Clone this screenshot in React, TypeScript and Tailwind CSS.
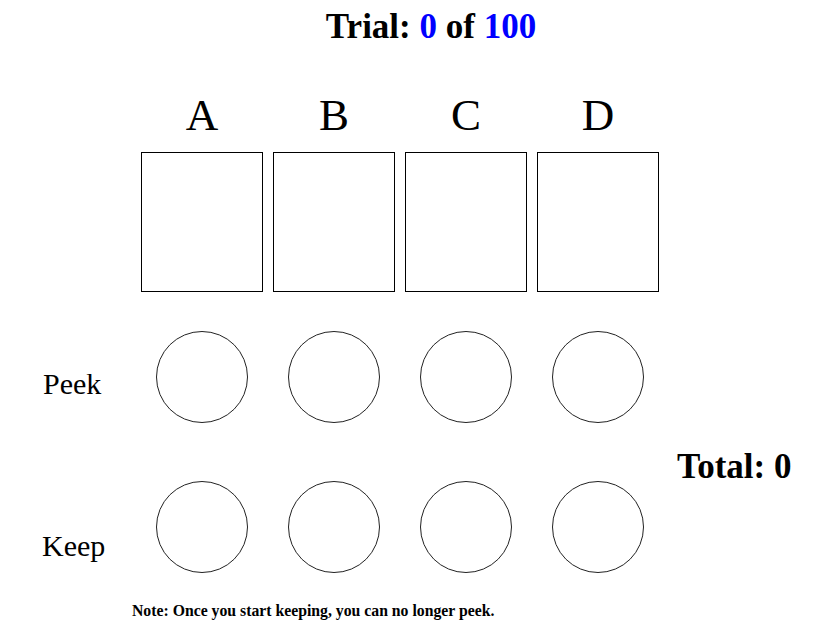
import React from "react";

const cols = ["A", "B", "C", "D"];

export default function App() {
  return (
    <div className="relative w-[834px] h-[643px] bg-white text-black font-['Liberation_Serif',serif]">
      <div className="pt-[7px] pl-[28px] text-center text-[35px] leading-[40px] font-bold">
        Trial: <span className="text-[#0000ff]">0</span> of <span className="text-[#0000ff]">100</span>
      </div>

      <div className="flex pl-[141px] gap-[10px] mt-[46px]">
        {cols.map((c) => (
          <div key={c} className="w-[122px] text-center text-[45px] leading-[45px]">
            {c}
          </div>
        ))}
      </div>

      <div className="flex pl-[141px] gap-[10px] mt-[14px]">
        {cols.map((c) => (
          <div key={c} className="w-[122px] h-[140px] border border-black" />
        ))}
      </div>

      <div className="flex mt-[39px]">
        <div className="flex flex-col">
          <div className="flex">
            <div className="w-[141px] pl-[43px] pt-[38px] text-[30px] leading-[30px]">Peek</div>
            <div className="flex gap-[10px]">
              {cols.map((c) => (
                <div key={c} className="w-[122px] flex justify-center">
                  <div className="w-[92px] h-[92px] rounded-full border border-[#222]" />
                </div>
              ))}
            </div>
          </div>
          <div className="flex mt-[58px]">
            <div className="w-[141px] pl-[42px] pt-[50px] text-[30px] leading-[30px]">Keep</div>
            <div className="flex gap-[10px]">
              {cols.map((c) => (
                <div key={c} className="w-[122px] flex justify-center">
                  <div className="w-[92px] h-[92px] rounded-full border border-[#222]" />
                </div>
              ))}
            </div>
          </div>
        </div>
        <div className="ml-[18px] pt-[118px] text-[35px] leading-[35px] font-bold whitespace-nowrap">
          Total: 0
        </div>
      </div>

      <div className="pl-[132px] mt-[30px] text-[15.75px] leading-[16px] font-bold">
        Note: Once you start keeping, you can no longer peek.
      </div>
    </div>
  );
}
